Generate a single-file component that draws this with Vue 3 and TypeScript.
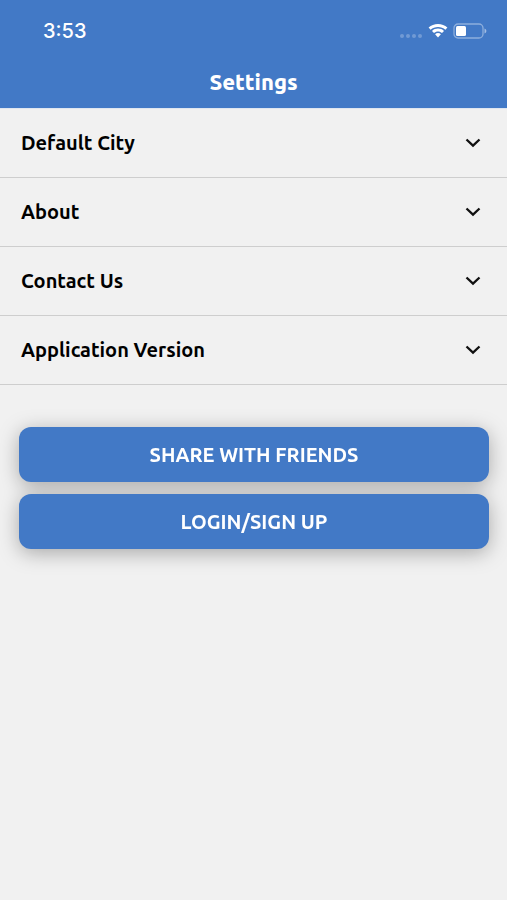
<script setup lang="ts">
import { ref } from 'vue'

interface Section {
  id: string
  title: string
}

const sections: Section[] = [
  { id: 'city', title: 'Default City' },
  { id: 'about', title: 'About' },
  { id: 'contact', title: 'Contact Us' },
  { id: 'version', title: 'Application Version' },
]

const actions: string[] = ['SHARE WITH FRIENDS', 'LOGIN/SIGN UP']

const selected = ref<string | null>(null)

function select(id: string): void {
  selected.value = selected.value === id ? null : id
}
</script>

<template>
  <div class="screen">
    <header class="header">
      <div class="status">
        <span class="time">3:53</span>
        <div class="indicators">
          <svg class="signal" width="24" height="6" viewBox="0 0 24 6" aria-hidden="true">
            <circle cx="3" cy="3" r="2" />
            <circle cx="9" cy="3" r="2" />
            <circle cx="15" cy="3" r="2" />
            <circle cx="21" cy="3" r="2" />
          </svg>
          <svg width="20" height="16" viewBox="0 0 20 16" fill="#fff" aria-hidden="true">
            <path d="M10 1C6.400 1 3.100 2.300.600 4.600L2.600 6.700C4.600 4.900 7.200 3.900 10 3.900S15.400 4.900 17.400 6.700L19.400 4.600C16.900 2.300 13.600 1 10 1Z" />
            <path d="M10 5.600C7.700 5.600 5.600 6.400 4 7.900L6 10C7.100 9 8.500 8.400 10 8.400S12.900 9 14 10L16 7.900C14.400 6.400 12.300 5.600 10 5.600Z" />
            <path d="M10 10.100C8.900 10.100 7.900 10.500 7.100 11.200L10 14.600L12.900 11.200C12.100 10.500 11.100 10.100 10 10.100Z" />
          </svg>
          <svg width="34" height="16" viewBox="0 0 34 16" aria-hidden="true">
            <rect x="1" y="1" width="29" height="14" rx="4" fill="none" stroke="#fff" stroke-opacity=".4" stroke-width="1.300" />
            <rect x="3" y="3" width="10" height="10" rx="1.500" fill="#fff" />
            <path d="M31.500 5.500C34 6.500 34 9.500 31.500 10.500Z" fill="#fff" fill-opacity=".5" />
          </svg>
        </div>
      </div>
      <h1 class="title">Settings</h1>
    </header>

    <main>
      <ul class="sections">
        <li v-for="section in sections" :key="section.id">
          <button
            type="button"
            class="row"
            :aria-pressed="selected === section.id"
            @click="select(section.id)"
          >
            <span>{{ section.title }}</span>
            <svg class="chevron" width="16" height="10" viewBox="0 0 16 10" aria-hidden="true">
              <path d="M1.500 1.500L8 7.700L14.500 1.500" />
            </svg>
          </button>
        </li>
      </ul>
      <div class="actions">
        <button v-for="label in actions" :key="label" type="button" class="action">
          {{ label }}
        </button>
      </div>
    </main>
  </div>
</template>

<style>
body {
  margin: 0;
  background: #f1f1f1;
}
</style>

<style scoped>
.screen {
  min-height: 100vh;
  background: #f1f1f1;
  color: #0b0b0b;
  font-family: Ubuntu, "Noto Sans", sans-serif;
}

.header {
  border-bottom: 1px solid #dfe6f0;
  background: #4279c6;
  background-clip: padding-box;
  color: #fff;
}

.status {
  display: flex;
  align-items: center;
  justify-content: space-between;
  height: 62px;
  padding: 0 20px 0 43px;
}

.time {
  font: 500 20px/24px Inter, sans-serif;
}

.indicators {
  display: flex;
  align-items: center;
  gap: 5px;
}

.signal {
  align-self: flex-end;
  fill: rgba(255, 255, 255, 0.25);
}

.title {
  margin: 0;
  padding: 4px 0 10px;
  font-size: 22px;
  line-height: 32px;
  font-weight: 800;
  text-align: center;
}

.sections {
  margin: 0;
  padding: 0;
  list-style: none;
}

.row {
  display: flex;
  align-items: center;
  justify-content: space-between;
  box-sizing: border-box;
  width: 100%;
  padding: 20px 26px 20px 21px;
  border: 0;
  border-bottom: 1px solid #cecece;
  background: transparent;
  color: #000;
  font: inherit;
  font-size: 20px;
  line-height: 28px;
  font-weight: 750;
  text-align: left;
  cursor: pointer;
}

.chevron {
  fill: none;
  stroke: #111;
  stroke-width: 2.300;
}

.actions {
  display: grid;
  gap: 12px;
  padding: 42px 18px 42px 19px;
  filter: drop-shadow(0 4px 10px rgba(0, 0, 0, 0.3));
}

.action {
  padding: 13px;
  border: 0;
  border-radius: 12px;
  background: #4279c6;
  color: #fff;
  font: inherit;
  font-size: 20px;
  line-height: 29px;
  font-weight: 750;
  cursor: pointer;
}
</style>
